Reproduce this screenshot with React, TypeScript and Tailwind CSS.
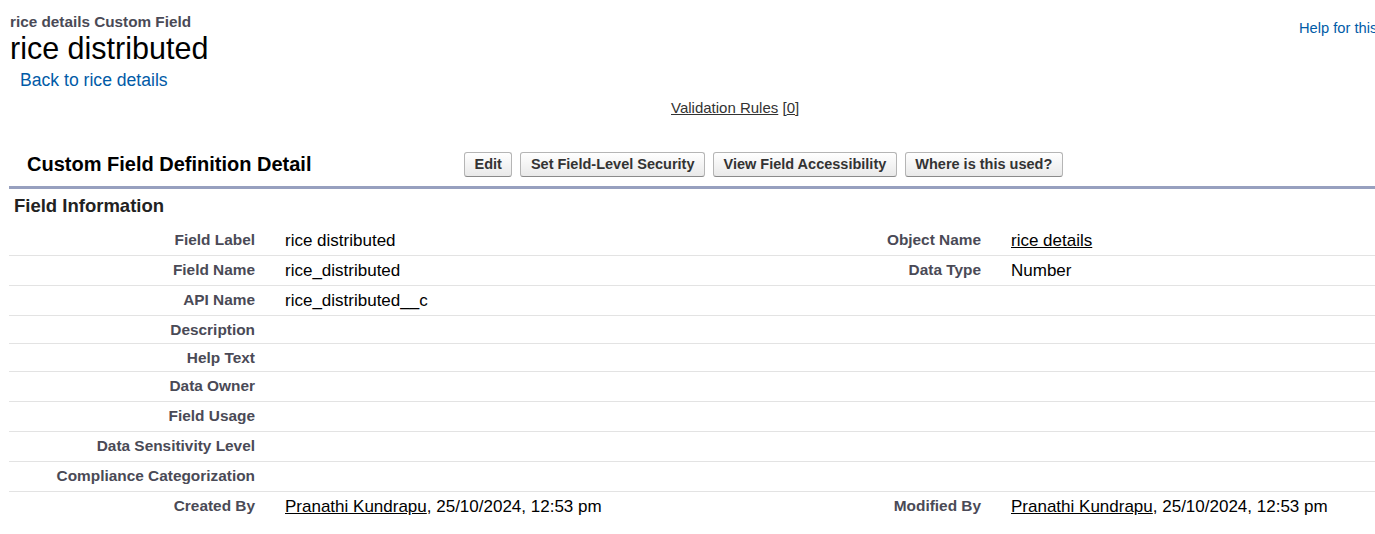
import React from "react";

const rows: { label: string; value?: React.ReactNode; label2?: string; value2?: React.ReactNode; h: string; border: boolean }[] = [
  { label: "Field Label", value: "rice distributed", label2: "Object Name", value2: <span className="underline">rice details</span>, h: "h-[31px]", border: true },
  { label: "Field Name", value: "rice_distributed", label2: "Data Type", value2: "Number", h: "h-[30px]", border: true },
  { label: "API Name", value: "rice_distributed__c", h: "h-[30px]", border: true },
  { label: "Description", h: "h-[28px]", border: true },
  { label: "Help Text", h: "h-[28px]", border: true },
  { label: "Data Owner", h: "h-[30px]", border: true },
  { label: "Field Usage", h: "h-[30px]", border: true },
  { label: "Data Sensitivity Level", h: "h-[30px]", border: true },
  { label: "Compliance Categorization", h: "h-[30px]", border: true },
  {
    label: "Created By",
    value: (
      <>
        <span className="underline">Pranathi Kundrapu</span>, 25/10/2024, 12:53 pm
      </>
    ),
    label2: "Modified By",
    value2: (
      <>
        <span className="underline">Pranathi Kundrapu</span>, 25/10/2024, 12:53 pm
      </>
    ),
    h: "h-[30px]",
    border: false,
  },
];

function Btn({ children }: { children: React.ReactNode }) {
  return (
    <button className="h-[25px] px-[9.5px] rounded-[3px] border border-[#b5b5b5] border-b-[#8a8a8a] bg-gradient-to-b from-[#ffffff] to-[#e9e9e9] text-[14.5px] font-bold text-[#333333] leading-[23px] whitespace-nowrap">
      {children}
    </button>
  );
}

export default function App() {
  return (
    <div
      className="w-[1375px] h-[534px] bg-white overflow-hidden"
      style={{ fontFamily: '"Liberation Sans", Arial, sans-serif' }}
    >
      <div className="flex justify-between">
        <div className="pl-[10px] pt-[14px]">
          <div className="h-[17px] leading-[16px] text-[15.3px] font-bold text-[#4a4a56] whitespace-nowrap">
            rice details Custom Field
          </div>
          <h1 className="h-[34px] leading-[34px] text-[30.5px] text-black whitespace-nowrap">rice distributed</h1>
        </div>
        <div className="pt-[16px] w-[76px] overflow-hidden">
          <a className="text-[14.7px] leading-[18px] text-[#015ba7] whitespace-nowrap">Help for this Page</a>
        </div>
      </div>
      <div className="pl-[20px] mt-[5px] h-[20px] leading-[20px] text-[17.6px] text-[#015ba7] whitespace-nowrap">
        Back to rice details
      </div>
      <div className="pl-[671px] mt-[9px] h-[18px] leading-[18px] text-[15px] text-[#333333] whitespace-nowrap">
        <span className="underline">Validation Rules</span> [<span className="underline">0</span>]
      </div>
      <div className="mt-[35px] h-[25px] flex items-center">
        <div className="w-[464px] pl-[27px] text-[20px] font-bold text-black leading-[24px] whitespace-nowrap -mt-[1px]">
          Custom Field Definition Detail
        </div>
        <div className="flex gap-[8px]">
          <Btn>Edit</Btn>
          <Btn>Set Field-Level Security</Btn>
          <Btn>View Field Accessibility</Btn>
          <Btn>Where is this used?</Btn>
        </div>
      </div>
      <div className="ml-[9px] mt-[9px] border-t-[3px] border-[#97a0bf]" />
      <div className="ml-[9px] pl-[5px] mt-[7px] h-[20px] leading-[20px] text-[18.5px] font-bold text-[#222222] whitespace-nowrap">
        Field Information
      </div>
      <div className="ml-[9px] mt-[9px]">
        {rows.map((r, i) => (
          <div
            key={r.label}
            className={`${r.h} flex items-start ${r.border ? "border-b border-[#e3e3e3]" : ""}`}
          >
            <div
              className={`w-[256px] pr-[10px] ${i === 0 ? "pt-[6px]" : "pt-[5px]"} text-right text-[15.4px] leading-[17px] font-bold text-[#4a4a56] whitespace-nowrap`}
            >
              {r.label}
            </div>
            <div
              className={`w-[470px] pl-[20px] ${i === 0 ? "pt-[7px]" : "pt-[6px]"} text-[17px] leading-[17px] text-black whitespace-nowrap`}
            >
              {r.value}
            </div>
            <div
              className={`w-[256px] pr-[10px] ${i === 0 ? "pt-[6px]" : "pt-[5px]"} text-right text-[15.4px] leading-[17px] font-bold text-[#4a4a56] whitespace-nowrap`}
            >
              {r.label2}
            </div>
            <div
              className={`flex-1 pl-[20px] ${i === 0 ? "pt-[7px]" : "pt-[6px]"} text-[17px] leading-[17px] text-black whitespace-nowrap`}
            >
              {r.value2}
            </div>
          </div>
        ))}
      </div>
    </div>
  );
}
